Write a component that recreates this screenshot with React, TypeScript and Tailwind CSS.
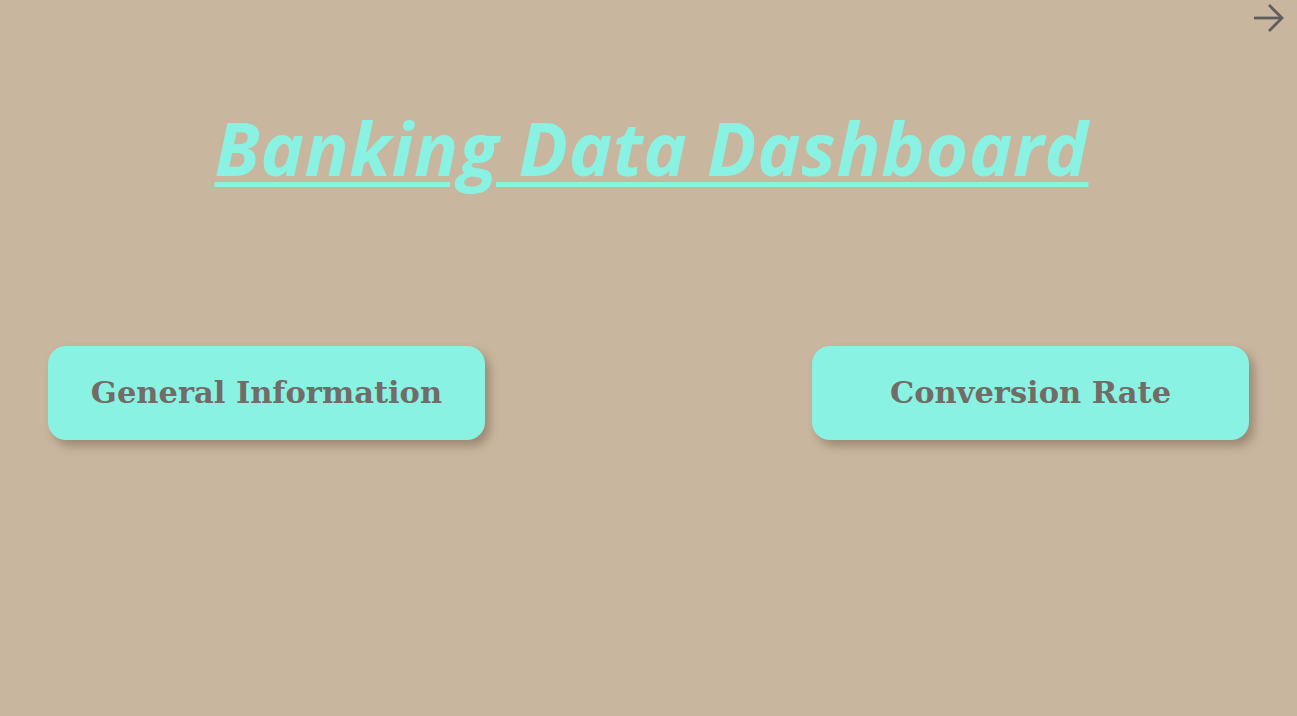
export default function App() {
  return (
    <div className="relative w-full h-[716px] bg-[#c9b69f] overflow-hidden">
      {/* next page arrow */}
      <button className="absolute right-[11px] top-[2px] text-[#5e5e5e]" title="Next">
        <svg width="34" height="32" viewBox="0 0 34 32" fill="none" stroke="currentColor" strokeWidth="2.8">
          <path d="M2 16 H30" />
          <path d="M17 3 L30 16 L17 29" />
        </svg>
      </button>

      <div className="pt-[104px] flex justify-center">
        <h1 className="font-['Open_Sans',sans-serif] italic font-bold text-[73px] leading-[88px] text-[#8af2e2] underline decoration-[5px] underline-offset-[6px] tracking-[0.7px] pl-[6px]">
          Banking Data Dashboard
        </h1>
      </div>

      <div className="mt-[154px] flex justify-between px-12">
        <button className="w-[437px] h-[94px] rounded-[18px] bg-[#8af2e2] shadow-[5px_6px_10px_rgba(90,70,50,0.4)] font-['DejaVu_Serif',serif] font-bold text-[30.5px] text-[#726b66]">
          General Information
        </button>
        <button className="w-[437px] h-[94px] rounded-[18px] bg-[#8af2e2] shadow-[5px_6px_10px_rgba(90,70,50,0.4)] font-['DejaVu_Serif',serif] font-bold text-[30.5px] text-[#726b66]">
          Conversion Rate
        </button>
      </div>
    </div>
  );
}
